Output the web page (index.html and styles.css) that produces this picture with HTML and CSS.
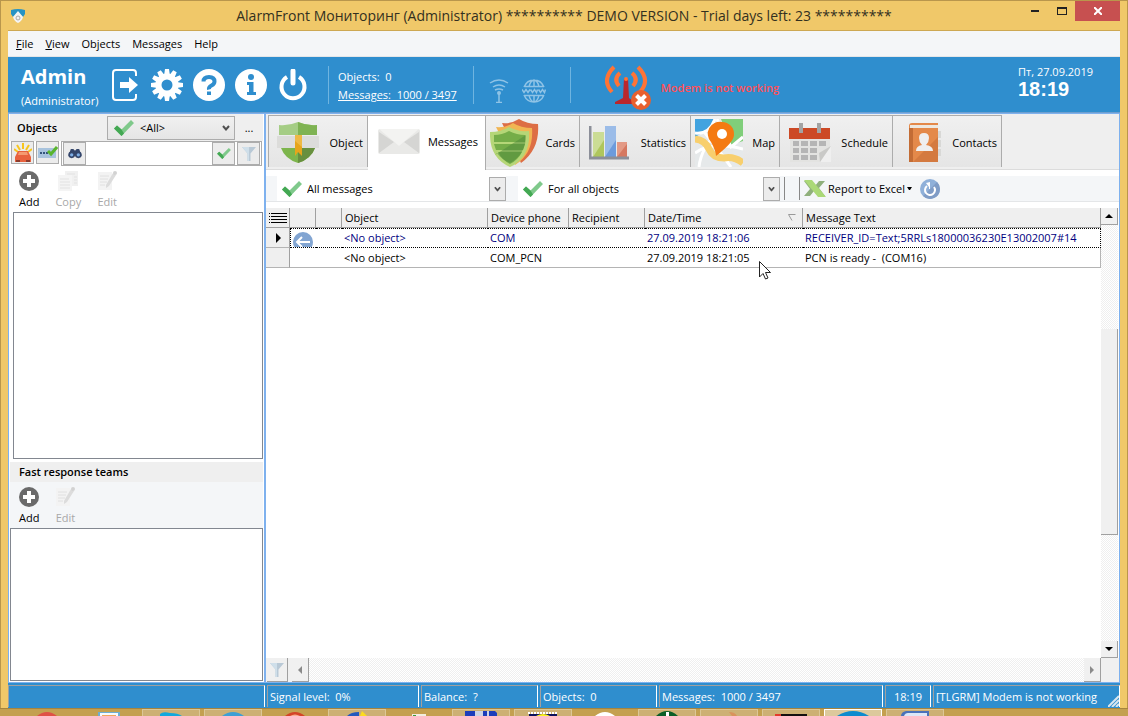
FILE: index.html
```html
<!DOCTYPE html>
<html lang="en">
<head>
    <meta charset="utf-8">
    <title>AlarmFront Мониторинг</title>
    <meta name="viewport" content="width=device-width, initial-scale=1">
    <link rel="stylesheet" href="styles.css">
</head>
<body>

<!-- shared icons -->
<svg class="sprite" aria-hidden="true">
    <symbol id="check" viewBox="0 0 20 16">
        <path d="M0 8.500 3 5.500 7.500 9.500 17 0 20 3 7.500 16z" fill="#7fc98b"/>
        <path d="M0 8.500 3 5.500 7.500 9.500 10 13.500 7.500 16z" fill="#43a853"/>
    </symbol>
    <symbol id="chevron" viewBox="0 0 8 6">
        <path d="M1 1l3 3.500L7 1" fill="none" stroke="#505050" stroke-width="2"/>
    </symbol>
    <symbol id="funnel" viewBox="0 0 14 14">
        <path d="M0 0h14L8.500 6.500V14h-3V6.500z" fill="#b9c9d6"/>
        <path d="M0 0h7v14H5.500V6.500z" fill="#cfdfea"/>
    </symbol>
    <symbol id="add" viewBox="0 0 20 20">
        <circle cx="10" cy="10" r="10" fill="#6a6a6a"/>
        <path d="M8 4h4v4h4v4h-4v4H8v-4H4V8h4z" fill="#fff"/>
    </symbol>
    <symbol id="copy" viewBox="0 0 20 20">
        <path d="M7 0h13v15H7z" fill="#f0f0f0"/>
        <path d="M0 4h14v16H0z" fill="#f4f4f4"/>
        <path d="M2 8h9M2 11h10M2 14h10M2 17h10M9 3h8M16 6h3M16 9h3M16 12h3" stroke="#e2e2e2" fill="none"/>
    </symbol>
    <symbol id="edit" viewBox="0 0 20 20">
        <path d="M1 1h14v18H1z" fill="#f3f3f3"/>
        <path d="M3 5h9M3 8h8M3 11h7M3 14h5" stroke="#e0e0e0" fill="none"/>
        <path d="M9 14 16 2l3 2-7 11-3 2z" fill="#dcdcdc"/>
        <circle cx="18" cy="2" r="2" fill="#d2d2d2"/>
    </symbol>
</svg>

<div class="window">
    <header class="titlebar">
        <svg class="app-icon" width="14" height="14" viewBox="0 0 14 14">
            <path d="M0 1Q7-1 14 1V5L12 8 7 3 2 8 0 5z" fill="#2793c4"/>
            <path d="M7 2 2 8q1 4 5 6 4-2 5-6z" fill="#f4f4f4"/>
            <circle cx="7" cy="9" r="2" fill="none" stroke="#aaa"/>
        </svg>
        <h1>AlarmFront Мониторинг (Administrator) ********** DEMO VERSION - Trial days left: 23 **********</h1>
        <div class="window-buttons">
            <button aria-label="Minimize"><svg width="8" height="2"><path d="M0 0h8v2H0z" fill="#222"/></svg></button>
            <button aria-label="Maximize"><svg width="10" height="8"><path d="M0 0h10v8H0zM1 2v5h8V2z" fill="#222" fill-rule="evenodd"/></svg></button>
            <button class="close" aria-label="Close"><svg width="8" height="8" viewBox="0 0 8 8"><path d="M0 0l8 8M8 0L0 8" stroke="#fff" stroke-width="2"/></svg></button>
        </div>
    </header>

    <div class="client">
        <nav class="menu">
            <a href="#"><u>F</u>ile</a>
            <a href="#"><u>V</u>iew</a>
            <a href="#">Objects</a>
            <a href="#">Messages</a>
            <a href="#">Help</a>
        </nav>

        <div class="banner">
            <div class="user">
                <strong>Admin</strong>
                <span>(Administrator)</span>
            </div>
            <div class="actions">
                <button aria-label="Log out">
                    <svg width="32" height="32" viewBox="0 0 32 32">
                        <path d="M27 7V4q0-3-3-3H7Q4 1 4 4v24q0 3 3 3h17q3 0 3-3v-3" fill="none" stroke="#fff" stroke-width="2"/>
                        <path d="M11 13h9V8l9 8-9 8v-5h-9z" fill="#fff"/>
                    </svg>
                </button>
                <button aria-label="Settings">
                    <svg width="32" height="32" viewBox="-16 -16 32 32">
                        <g fill="#fff">
                            <g id="teeth"><path id="tooth" d="M-3-9-2-16h4l1 7zM-3 9-2 16h4l1-7z"/><use href="#tooth" transform="rotate(90)"/></g>
                            <use href="#teeth" transform="rotate(30)"/>
                            <use href="#teeth" transform="rotate(60)"/>
                        </g>
                        <circle r="8.500" fill="none" stroke="#fff" stroke-width="6"/>
                    </svg>
                </button>
                <button aria-label="Help">
                    <svg width="32" height="32" viewBox="0 0 32 32">
                        <circle cx="16" cy="16" r="16" fill="#fff"/>
                        <path d="M10.500 12.500Q10.500 8 16 8t5.500 4.500Q21.500 15 18.500 16.500T16 20.500" fill="none" stroke="#2f8ece" stroke-width="4"/>
                        <path d="M14 22.500h4V26h-4z" fill="#2f8ece"/>
                    </svg>
                </button>
                <button aria-label="Information">
                    <svg width="32" height="32" viewBox="0 0 32 32">
                        <circle cx="16" cy="16" r="16" fill="#fff"/>
                        <circle cx="16" cy="8" r="3" fill="#2f8ece"/>
                        <path d="M12 13h6.500v10H21v3h-9v-3h2v-7h-2z" fill="#2f8ece"/>
                    </svg>
                </button>
                <button aria-label="Exit">
                    <svg width="32" height="32" viewBox="0 0 32 32">
                        <path d="M10 8a11.500 11.500 0 1 0 12 0" fill="none" stroke="#fff" stroke-width="4"/>
                        <path d="M16 2v12" stroke="#fff" stroke-width="5" stroke-linecap="round"/>
                    </svg>
                </button>
            </div>
            <div class="counters">
                <span>Objects:&nbsp; 0</span>
                <a href="#">Messages:&nbsp; 1000 / 3497</a>
            </div>
            <div class="links">
                <svg width="20" height="24" viewBox="0 0 20 24" fill="none" stroke="#8fc3e6" stroke-width="2">
                    <path d="M1 4Q10-2 19 4M4 8q6-4 12 0M6 11q4-2 8 0M10 14v9M7 23.500h6" stroke-width="1.500"/>
                    <circle cx="10" cy="14" r="1"/>
                </svg>
                <svg width="24" height="24" viewBox="0 0 24 24" fill="none" stroke="#8fc3e6" stroke-width="2">
                    <path d="M2 8Q5 1 12 1t10 7M2 16q3 7 10 7t10-7M7 8q1-6 5-7 4 1 5 7M7 16q1 6 5 7 4-1 5-7M2 7.500h20M2 16.500h20M12 1v7M12 16v7" stroke-width="1.500"/>
                    <path d="M0 10.500l2 3 2-3 2 3 2-3M8.500 10.500l2 3 2-3 2 3 1-3M16.500 10.500l2 3 2-3 2 3 1-3" stroke-width="1.500"/>
                </svg>
            </div>
            <div class="modem">
                <svg width="46" height="46" viewBox="0 0 46 46">
                    <path d="M9 2Q-4 15 7 27M33 2q13 13 2 25" fill="none" stroke="#ff7436" stroke-width="4"/>
                    <path d="M15 8q-7 6-1 13M27 8q7 6 1 13" fill="none" stroke="#ff7436" stroke-width="4"/>
                    <path d="M19 13h4l1 20 8 6H10v-2l8-4z" fill="#b9272d"/>
                    <circle cx="21" cy="14" r="2" fill="#ff7436"/>
                    <circle cx="36" cy="35" r="10" fill="#e8602f"/>
                    <path d="M31.500 30.500l9 9M40.500 30.500l-9 9" stroke="#fff" stroke-width="4"/>
                </svg>
                <strong>Modem is not working</strong>
            </div>
            <div class="clock">
                <span>Пт, 27.09.2019</span>
                <strong>18:19</strong>
            </div>
        </div>

        <main>
            <aside>
                <div class="panel-title">
                    <h2>Objects</h2>
                    <div class="combo group-combo">
                        <svg width="20" height="16"><use href="#check"/></svg>
                        <select aria-label="Object group"><option>&lt;All&gt;</option></select>
                        <svg class="caret" width="8" height="6"><use href="#chevron"/></svg>
                    </div>
                    <button class="more" aria-label="More groups">...</button>
                </div>
                <div class="search-row">
                    <button class="tool" aria-label="Alarms">
                        <svg width="18" height="20" viewBox="0 0 18 20">
                            <path d="M9 0v6M3 2l3 5M15 2l-3 5M0 6l4 3M18 6l-4 3" stroke="#f7c51e" stroke-width="2"/>
                            <path d="M4 8h10l2 4 1 2v5H1v-5l1-2z" fill="#e8623e"/>
                            <path d="M5 9h8l1 3H4z" fill="#f59a70"/>
                            <path d="M2 17h4v2H2zM12 17h4v2h-4z" fill="#8d3b2c"/>
                        </svg>
                    </button>
                    <button class="tool" aria-label="Lines">
                        <svg width="20" height="14" viewBox="0 0 20 14">
                            <path d="M0 2h18v10H0z" fill="#a8c3dd"/>
                            <path d="M2 7h11" stroke="#34557c" stroke-width="2" stroke-dasharray="2 1"/>
                            <path d="M10 5l3 3 6-7" fill="none" stroke="#59b52d" stroke-width="3"/>
                        </svg>
                    </button>
                    <div class="search">
                        <button class="tool" aria-label="Find">
                            <svg width="16" height="10" viewBox="0 0 16 12">
                                <path d="M3 0h3l2 2 2-2h3l3 8H0z" fill="#34466b"/>
                                <circle cx="4" cy="7" r="4" fill="#34466b"/><circle cx="12" cy="7" r="4" fill="#34466b"/>
                                <circle cx="4" cy="7" r="2" fill="#7eaee6"/><circle cx="12" cy="7" r="2" fill="#7eaee6"/>
                            </svg>
                        </button>
                        <input type="text" aria-label="Search objects">
                        <button class="tool" aria-label="Apply"><svg width="14" height="11"><use href="#check"/></svg></button>
                        <button class="tool" aria-label="Filter"><svg width="14" height="14"><use href="#funnel"/></svg></button>
                    </div>
                </div>
                <div class="toolbar">
                    <button><svg width="20" height="20"><use href="#add"/></svg>Add</button>
                    <button disabled><svg width="20" height="20"><use href="#copy"/></svg>Copy</button>
                    <button disabled><svg width="20" height="20"><use href="#edit"/></svg>Edit</button>
                </div>
                <div class="list objects-list"></div>

                <h2 class="teams-title">Fast response teams</h2>
                <div class="toolbar teams-toolbar">
                    <button><svg width="20" height="20"><use href="#add"/></svg>Add</button>
                    <button disabled><svg width="20" height="20"><use href="#edit"/></svg>Edit</button>
                </div>
                <div class="list teams-list"></div>
            </aside>

            <section class="content">
                <div class="tabs">
                    <button class="tab tab-object">
                        <svg width="42" height="42" viewBox="0 0 42 42">
                            <path d="M2 3q10 1 19-3 9 4 19 3v10H2z" fill="#a5cd85"/>
                            <path d="M21 0q9 4 19 3v10H21z" fill="#7fb353"/>
                            <path d="M4 26h34q-4 11-17 15Q8 37 4 26z" fill="#7db54c"/>
                            <path d="M21 26h17q-4 11-17 15z" fill="#68903f"/>
                            <path d="M0 14h42v12H0z" fill="#dcdcda"/>
                            <path d="M18 13h7v21l-4-4-3 4z" fill="#e6a51b"/>
                            <path d="M25 13v12l-7-6v-6z" fill="#eeb944"/>
                        </svg>
                        Object
                    </button>
                    <button class="tab tab-messages active">
                        <svg width="42" height="26" viewBox="0 0 42 26">
                            <rect width="42" height="25" rx="2" fill="#e9e9e7"/>
                            <path d="M1 3l15 10L1 24zM41 3L26 13l15 11z" fill="#d5d5d3"/>
                            <path d="M1 0h40L21 17z" fill="#f3f3f1"/>
                        </svg>
                        Messages
                    </button>
                    <button class="tab tab-cards">
                        <svg width="50" height="48" viewBox="0 0 50 48">
                            <path d="M12 4q9 1 17-4 8 5 19 5 2 25-17 39z" fill="#dd6e45"/>
                            <path d="M6 8q9 1 17-4 8 5 19 5 2 25-17 37z" fill="#f1b553"/>
                            <path d="M0 13q11 0 19-5 9 5 20 4 2 26-19 36Q-1 39 0 13z" fill="#b5d677"/>
                            <path d="M4 16q8 0 15-4 8 4 16 4v7H4zM4 25h31l-2 6H6zM8 33h24q-4 8-12 12-8-4-12-12z" fill="#75ad48"/>
                            <path d="M5 36 36 16q0 19-16 28-9-4-13-10z" fill="#4d873a" opacity=".5"/>
                        </svg>
                        Cards
                    </button>
                    <button class="tab tab-statistics">
                        <svg width="41" height="36" viewBox="0 0 41 36">
                            <path d="M4 7h11v25H4z" fill="#cbdc95"/><path d="M4 32 15 15v17z" fill="#afc65d"/>
                            <path d="M16 1h11v31H16z" fill="#9bbce8"/><path d="M16 32 27 15v17z" fill="#6d9bdc"/>
                            <path d="M28 17h10v15H28z" fill="#e39a86"/><path d="M28 32 38 19v13z" fill="#d57861"/>
                            <path d="M1 1v32h39" fill="none" stroke="#8c8f99" stroke-width="3"/>
                        </svg>
                        Statistics
                    </button>
                    <button class="tab tab-map">
                        <svg width="48" height="48" viewBox="0 0 48 48">
                            <path d="M0 0h48v48H0z" fill="#e6e9ea"/>
                            <path d="M0 0h20Q16 10 0 18z" fill="#42a3df"/>
                            <path d="M26 0h22v22l-12 4z" fill="#80ce7a"/>
                            <path d="M0 14Q14 16 20 0M22 0l14 28 12-10M4 48q2-20 22-38M0 34q16-12 48-4M36 48Q26 34 10 14" fill="none" stroke="#fff" stroke-width="3"/>
                            <path d="M0 20q10 1 14 10t15 9q10-2 19 5" fill="none" stroke="#f8cf6d" stroke-width="7"/>
                            <path d="M27 3a12 12 0 0 1 12 13q0 7-18 21 0-5-5-14A12 12 0 0 1 27 3z" fill="#f47a12"/>
                            <circle cx="27" cy="15" r="5" fill="#fff"/>
                        </svg>
                        Map
                    </button>
                    <button class="tab tab-schedule">
                        <svg width="42" height="40" viewBox="0 0 42 40">
                            <path d="M1 5h40v34H1z" fill="#e3e3e1"/>
                            <path d="M0 5h41v11H0z" fill="#cc4925"/>
                            <path d="M10 0h4v10h-4zM28 0h4v10h-4z" fill="#a3a3a3"/>
                            <path d="M4 18h6v5H4zM12 18h7v5h-7zM21 18h7v5h-7zM30 18h7v5h-7zM4 25h6v5H4zM12 25h7v5h-7zM21 25h7v5h-7zM4 32h6v5H4zM12 32h7v5h-7zM21 32h7v5h-7z" fill="#b5b5b5"/>
                            <path d="M42 23 31 39h11z" fill="#efefef"/><path d="M42 23 30 30l1 9z" fill="#c9c9c7"/>
                        </svg>
                        Schedule
                    </button>
                    <button class="tab tab-contacts">
                        <svg width="34" height="40" viewBox="0 0 34 40">
                            <path d="M29 8h4v7h-4zM29 17h4v7h-4zM29 26h4v7h-4z" fill="#d8d8d6"/>
                            <path d="M1 3q0-3 3-3h26v39H1z" fill="#e4894a"/>
                            <path d="M2 2h28v3H2z" fill="#eee8e0"/>
                            <path d="M1 5h4v34H1z" fill="#c36c35"/>
                            <path d="M30 14v25H5z" fill="#c36c35" opacity=".5"/>
                            <path d="M8 28q0-5 6-6-3-3-3-7 0-5 5-5t5 5q0 4-3 7 7 1 7 6z" fill="#efefef"/>
                        </svg>
                        Contacts
                    </button>
                </div>

                <div class="filters">
                    <div class="combo message-combo">
                        <svg width="20" height="16"><use href="#check"/></svg>
                        <select aria-label="Message type"><option>All messages</option></select>
                        <svg class="caret boxed" width="8" height="6" viewBox="0 0 8 6"><use href="#chevron"/></svg>
                    </div>
                    <div class="combo object-combo">
                        <svg width="20" height="16"><use href="#check"/></svg>
                        <select aria-label="Object"><option>For all objects</option></select>
                        <svg class="caret boxed" width="8" height="6" viewBox="0 0 8 6"><use href="#chevron"/></svg>
                    </div>
                    <span class="divider"></span>
                    <div class="report">
                        <button>
                            <svg width="22" height="17" viewBox="0 0 22 17">
                                <path d="M0 1h7l4 5 4-5h6l-6 7 6 8h-7l-4-5-4 5H0l6-7z" fill="#90b07c"/>
                                <path d="M0 0h8l14 17h-8z" fill="#abd977"/>
                            </svg>
                            Report to Excel
                            <svg width="5" height="3"><path d="M0 0h5L3 3H2z"/></svg>
                        </button>
                        <button aria-label="Refresh">
                            <svg width="20" height="20" viewBox="0 0 20 20">
                                <circle cx="10" cy="10" r="10" fill="#8fb0d9"/>
                                <path d="M20 10a10 10 0 0 1-17 7L17 3a10 10 0 0 1 3 7z" fill="#7f9cc6"/>
                                <path d="M7 7a5 5 0 1 0 7 1" fill="none" stroke="#fff" stroke-width="2"/>
                                <path d="M10 3v7H9V8L6 4z" fill="#fff"/>
                            </svg>
                        </button>
                    </div>
                </div>

                <div class="grid">
                    <div class="grid-body">
                        <table>
                            <colgroup>
                                <col class="col-mark"><col class="col-icon"><col class="col-icon"><col class="col-object">
                                <col class="col-phone"><col class="col-recipient"><col class="col-date"><col>
                            </colgroup>
                            <thead>
                                <tr>
                                    <th><svg width="18" height="10"><path d="M0 .5h1M0 3.500h1M0 6.500h1M0 9.500h1M2 .5h16M2 3.500h16M2 6.500h16M2 9.500h16" stroke="#000"/></svg></th>
                                    <th></th>
                                    <th></th>
                                    <th>Object</th>
                                    <th>Device phone</th>
                                    <th>Recipient</th>
                                    <th><div class="sorted">Date/Time <svg width="8" height="7"><path d="M7.500.5h-7L4 6.500" fill="none" stroke="#999"/></svg></div></th>
                                    <th>Message Text</th>
                                </tr>
                            </thead>
                            <tbody>
                                <tr class="selected">
                                    <td><svg width="5" height="10"><path d="M0 0l5 5-5 5z"/></svg></td>
                                    <td>
                                        <svg class="incoming" width="20" height="15" viewBox="0 0 20 15">
                                            <circle cx="10" cy="10" r="10" fill="#82a5d2"/>
                                            <path d="M17 10H5M9 5l-5 5 5 5" fill="none" stroke="#fff" stroke-width="2"/>
                                        </svg>
                                    </td>
                                    <td></td>
                                    <td>&lt;No object&gt;</td>
                                    <td>COM</td>
                                    <td></td>
                                    <td>27.09.2019 18:21:06</td>
                                    <td>RECEIVER_ID=Text;5RRLs18000036230E13002007#14</td>
                                </tr>
                                <tr>
                                    <td></td>
                                    <td></td>
                                    <td></td>
                                    <td>&lt;No object&gt;</td>
                                    <td>COM_PCN</td>
                                    <td></td>
                                    <td>27.09.2019 18:21:05</td>
                                    <td>PCN is ready -&nbsp; (COM16)</td>
                                </tr>
                            </tbody>
                        </table>
                    </div>
                    <div class="vscroll">
                        <button aria-label="Scroll up"><svg width="8" height="4"><path d="M0 4l4-4 4 4z"/></svg></button>
                        <div class="track"><div class="thumb"></div></div>
                        <button aria-label="Scroll down"><svg width="8" height="4"><path d="M0 0h8L4 4z"/></svg></button>
                    </div>
                </div>
                <div class="hscroll">
                    <button aria-label="Filter"><svg width="14" height="14"><use href="#funnel"/></svg></button>
                    <button class="arrow" aria-label="Scroll left"><svg width="4" height="8"><path d="M4 0v8L0 4z" fill="#8a8a8a"/></svg></button>
                    <div class="track"></div>
                    <button class="arrow" aria-label="Scroll right"><svg width="4" height="8"><path d="M0 0v8l4-4z" fill="#8a8a8a"/></svg></button>
                </div>
            </section>
        </main>

        <footer class="status">
            <span class="cell-blank"></span>
            <span class="cell-signal">Signal level:&nbsp; 0%</span>
            <span class="cell-count">Balance:&nbsp; ?</span>
            <span class="cell-count">Objects:&nbsp; 0</span>
            <span class="cell-messages">Messages:&nbsp; 1000 / 3497</span>
            <span class="cell-time">18:19</span>
            <span class="cell-telegram"><b>[TLGRM] Modem is not working</b><svg width="11" height="12" viewBox="0 0 11 12"><path d="M0 12 11 1M4 12l7-7M8 12l3-3" stroke="#d9e6ee" stroke-width="2"/></svg></span>
        </footer>
    </div>
</div>

<div class="taskbar">
    <span><svg width="24" height="4" viewBox="0 0 24 4"><path d="M2 4Q12-4 22 4z" fill="#df5146"/></svg></span>
    <span><svg width="22" height="4"><path d="M0 0h22v4H0z" fill="#6eaed2"/><path d="M2 1h18v3H2z" fill="#f7fbfd"/><path d="M4 3h14v1H4z" fill="#f3a65c"/></svg></span>
    <span class="open"><svg width="22" height="4"><path d="M0 4V2q3-3 10-1 8 0 12 3z" fill="#12a8dc"/></svg></span>
    <span class="open"><svg width="22" height="4"><path d="M0 4Q11-4 22 4z" fill="#3d9fd5"/></svg></span>
    <span><svg width="20" height="4"><path d="M0 4Q10-4 20 4z" fill="#d54427"/><path d="M5 4q5-3 10 0z" fill="#f8ae92"/></svg></span>
    <span class="open"><svg width="24" height="5"><path d="M2 5q4-4 12-4v4z" fill="#2458bd"/><path d="M15 5l2-5 5 5z" fill="#fddc1e"/></svg></span>
    <span><svg width="14" height="3"><path d="M0 1h14v2H0z" fill="#f2efe0"/><path d="M1 2h3v1H1z" fill="#399a3d"/></svg></span>
    <span class="open"><svg width="32" height="5"><path d="M0 0h30l2 2v3H0z" fill="#1d3dba"/><path d="M10 0h14v5H10z" fill="#cdd3e4"/><path d="M18 0h4v5h-4z" fill="#1d3dba"/></svg></span>
    <span class="open"><svg width="30" height="4"><path d="M0 1h30" stroke="#fff" stroke-width="2" stroke-dasharray="2 1"/><path d="M1 2h28v2H1z" fill="#0c125d"/><path d="M8 4q7-4 14 0z" fill="#fdf51d"/></svg></span>
    <span><svg width="20" height="4"><path d="M0 4Q10-4 20 4z" fill="#fff"/></svg></span>
    <span class="open"><svg width="22" height="5"><path d="M0 5Q11-5 22 5z" fill="#0b5e27"/><path d="M10 1h3v4h-3z" fill="#fff"/></svg></span>
    <span class="open"><svg width="20" height="4"><path d="M10 0q6 0 8 4h-5z" fill="#d9935c"/></svg></span>
    <span class="open"><svg width="32" height="3"><path d="M0 1h32v2H0z" fill="#141010"/><path d="M0 1h6v2H0z" fill="#e23b2c"/></svg></span>
    <span class="open front"><svg width="32" height="5"><path d="M0 5Q16-5 32 5z" fill="#0d8bce"/></svg></span>
    <span class="open"><svg width="28" height="5"><path d="M0 5q0-4 5-5h23v5z" fill="#4a72ba"/><path d="M3 5q1-3 4-3h19v3z" fill="#dce7f8"/></svg></span>
</div>

<svg class="cursor" width="12" height="19" viewBox="0 0 12 19"><path d="M.5.500v15.500l3.500-3.500 2.500 5.500 2.500-1-2.500-5.500h5z" fill="#fff" stroke="#222"/></svg>

</body>
</html>
```

FILE: styles.css
```css
* {
    box-sizing: border-box;
}

body {
    margin: 0;
    height: 100vh;
    display: flex;
    flex-direction: column;
    overflow: hidden;
    background: #f0c869;
    font-family: "Open Sans", "Noto Sans", sans-serif;
    font-size: 11px;
    line-height: 16px;
    color: #000;
}

h1, h2 {
    margin: 0;
    font-size: inherit;
}

svg {
    display: block;
    flex: none;
}

a {
    color: inherit;
    text-decoration: none;
}

button, select, input {
    font: inherit;
    color: inherit;
    background: none;
    border: 0;
    border-radius: 0;
    padding: 0;
    margin: 0;
}

.sprite {
    position: absolute;
    width: 0;
    height: 0;
}

/* window frame */
.window {
    flex: 1;
    min-height: 0;
    display: flex;
    flex-direction: column;
    border: 1px solid #b9964c;
    border-bottom: 0;
    padding: 0 7px;
}

.titlebar {
    height: 29px;
    display: grid;
    grid-template-columns: 1fr auto 1fr;
    align-items: center;
}

.app-icon {
    margin-left: 3px;
}

.titlebar h1 {
    font-size: 14px;
    font-weight: normal;
    color: #33301f;
    white-space: nowrap;
}

.window-buttons {
    justify-self: end;
    align-self: start;
    display: flex;
}

.window-buttons button {
    width: 27px;
    height: 20px;
    display: flex;
    align-items: center;
    justify-content: center;
}

.window-buttons .close {
    width: 45px;
    background: #c75050;
}

.client {
    flex: 1;
    min-height: 0;
    display: flex;
    flex-direction: column;
    border-top: 1px solid #cda853;
    background: #fff;
}

.menu {
    height: 26px;
    display: flex;
    gap: 12px;
    align-items: center;
    padding-left: 8px;
    background: #f4f6f8;
    border-bottom: 1px solid #e4e6e8;
}

/* blue banner */
.banner {
    height: 56px;
    display: flex;
    align-items: center;
    background: #2f8ece;
    color: #fff;
    border-bottom: 1px solid #6e9fd0;
}

.user {
    width: 101px;
    padding: 4px 0 0 13px;
}

.user strong {
    display: block;
    font-size: 20px;
    line-height: 28px;
}

.user span, .counters span, .counters a, .clock span, .clock strong {
    display: block;
}

.user span {
    line-height: 20px;
}

.actions {
    display: flex;
    gap: 10px;
}

.counters {
    margin-left: 19px;
    padding: 0 16px 0 9px;
    border-left: 1px solid #6fb4e0;
    border-right: 1px solid #6fb4e0;
    line-height: 18px;
}

.counters span {
    padding-top: 2px;
}

.counters a {
    text-decoration: underline;
}

.links {
    height: 36px;
    display: flex;
    align-items: flex-end;
    gap: 13px;
    padding: 0 24px 0 15px;
    border-right: 1px solid #6fb4e0;
}

.modem {
    display: flex;
    align-items: center;
    gap: 10px;
    margin-left: 34px;
    padding-top: 6px;
    color: #ff5058;
}

.modem strong {
    font-weight: 600;
    white-space: nowrap;
}

.clock {
    margin: 0 27px 0 auto;
    padding-bottom: 6px;
    line-height: 14px;
}

.clock strong {
    font: bold 20px/20px "Liberation Sans", Arial, sans-serif;
}

main {
    flex: 1;
    min-height: 0;
    display: flex;
    border: 1px solid #7eb1ee;
}

/* left side */
aside {
    width: 257px;
    display: flex;
    flex-direction: column;
    border-right: 2px solid #7eb1ee;
    padding: 0 1px 1px;
}

.panel-title {
    height: 27px;
    display: flex;
    align-items: center;
    background: #efefef;
    padding-left: 7px;
}

.panel-title h2, .teams-title {
    font-weight: 600;
}

.panel-title h2 {
    flex: 1;
}

.combo {
    display: flex;
    align-items: center;
    position: relative;
}

.combo select {
    flex: 1;
    min-width: 0;
    height: 100%;
    appearance: none;
    outline: 0;
}

.caret {
    position: absolute;
    right: 4px;
    pointer-events: none;
}

.group-combo {
    width: 128px;
    height: 24px;
    gap: 6px;
    padding-left: 6px;
    border: 1px solid #acacac;
    background: linear-gradient(#f0f0f0, #e5e5e5);
}

.more {
    width: 28px;
}

.search-row {
    display: flex;
    gap: 2px;
    padding: 0 1px;
}

.tool {
    width: 23px;
    height: 23px;
    display: flex;
    align-items: center;
    justify-content: center;
    border: 1px solid #acacac;
    background: #ececec;
    flex: none;
}

.search {
    flex: 1;
    min-width: 0;
    display: flex;
    gap: 2px;
    border: 1px solid #acacac;
    padding: 0 1px;
}

.search input {
    flex: 1;
    min-width: 0;
}

.toolbar {
    height: 46px;
    display: flex;
    gap: 16px;
    padding: 5px 0 0 9px;
}

.toolbar button {
    display: flex;
    flex-direction: column;
    align-items: center;
    gap: 3px;
}

.toolbar button:disabled {
    color: #a8a8a8;
}

.teams-title {
    margin-top: 3px;
    padding: 2px 9px;
    background: #efefef;
}

.teams-toolbar {
    background: #f4f6f8;
}

.list {
    border: 1px solid #828790;
}

.objects-list {
    flex: 249;
    margin-left: 3px;
}

.teams-list {
    flex: 153;
}

/* right side */
.content {
    flex: 1;
    min-width: 0;
    display: flex;
    flex-direction: column;
}

.tabs {
    display: flex;
    align-items: flex-end;
    height: 56px;
    padding: 1px 2px 0;
    background: #efefef;
    border-bottom: 1px solid #dcdcdc;
}

.tab {
    height: 52px;
    margin-bottom: 2px;
    display: flex;
    align-items: center;
    justify-content: space-between;
    padding: 2px 4px 0;
    border: 1px solid #acacac;
    border-width: 1px 1px 0;
    background: linear-gradient(#f0f0f0, #e5e5e5);
}

.tab + .tab {
    border-left: 0;
}

.tab.active {
    height: 55px;
    margin-bottom: -1px;
    padding-bottom: 4px;
    background: #fff;
}

.tab-object {
    width: 100px;
    padding-left: 8px;
}

.tab-messages {
    width: 118px;
    padding-left: 10px;
    padding-right: 7px;
}

.tab-cards {
    width: 94px;
}

.tab-statistics {
    width: 111px;
    padding-left: 9px;
}

.tab-map {
    width: 89px;
}

.tab-schedule {
    width: 113px;
    padding-left: 9px;
}

.tab-contacts {
    width: 109px;
    padding-left: 15px;
}

.filters {
    height: 26px;
    margin: 6px 0;
    display: flex;
    padding-left: 11px;
    background: #f4f6f8;
    border-bottom: 1px solid #e4e6e8;
    flex: none;
}

.filters .combo {
    gap: 5px;
    padding-left: 5px;
    background: #fff;
}

.message-combo {
    width: 229px;
}

.object-combo {
    width: 262px;
    margin-left: 12px;
}

.caret.boxed {
    right: 0;
    width: 17px;
    height: 24px;
    padding: 8px 4px;
    border: 1px solid #acacac;
    background: #ececec;
}

.divider {
    width: 16px;
    margin: 1px 0 1px 4px;
    border: 1px solid #888;
    border-width: 0 1px;
}

.report {
    display: flex;
    align-items: center;
    gap: 8px;
    padding-left: 4px;
}

.report button {
    display: flex;
    align-items: center;
    white-space: nowrap;
    gap: 2px;
}

/* messages grid */
.grid {
    flex: 1;
    min-height: 0;
    display: flex;
}

.grid-body {
    flex: 1;
    min-width: 0;
}

table {
    width: 100%;
    table-layout: fixed;
    border-spacing: 0;
}

.col-mark {
    width: 24px;
}

.col-icon {
    width: 26px;
}

.col-object {
    width: 146px;
}

.col-phone {
    width: 81px;
}

.col-recipient {
    width: 76px;
}

.col-date {
    width: 158px;
}

th, td {
    height: 20px;
    padding: 0 0 0 3px;
    text-align: left;
    font-weight: normal;
    white-space: nowrap;
    overflow: hidden;
}

th {
    background: #efefef;
    border-right: 1px solid #a0a0a0;
    border-bottom: 1px solid #a0a0a0;
}

td {
    padding-left: 2px;
    border-bottom: 1px solid #b4b4b4;
}

td:first-child {
    background: #efefef;
    border-right: 1px solid #a0a0a0;
    padding-left: 10px;
}

td:last-child {
    border-right: 1px solid #b4b4b4;
}

.selected {
    color: #000080;
}

.selected td:not(:first-child) {
    border-top: 1px dotted #000;
    border-bottom: 1px dotted #000;
}

.selected td:nth-child(2) {
    border-left: 1px dotted #000;
}

.selected td:last-child {
    border-right: 1px dotted #000;
}

.incoming {
    margin-top: 3px;
}

.sorted {
    display: flex;
    align-items: center;
    justify-content: space-between;
    padding-right: 6px;
}

.vscroll {
    width: 18px;
    display: flex;
    flex-direction: column;
    padding-right: 1px;
}

.vscroll button, .hscroll button {
    display: flex;
    align-items: center;
    justify-content: center;
    background: #f0f0f0;
    border-right: 1px solid #a0a0a0;
    border-bottom: 1px solid #a0a0a0;
    flex: none;
}

.vscroll button {
    height: 17px;
}

.track {
    flex: 1;
    background: repeating-conic-gradient(#fff 0 25%, #efefef 0 50%) 0 0 / 2px 2px;
}

.vscroll .track {
    padding-top: 104px;
}

.thumb {
    height: 66%;
    background: #f0f0f0;
    border: 1px solid #a0a0a0;
    border-width: 0 1px 1px 0;
}

.hscroll {
    height: 24px;
    display: flex;
    padding: 0 18px 0 1px;
    background: #f0f0f0;
}

.hscroll button {
    width: 21px;
}

.hscroll .arrow {
    width: 17px;
}

.hscroll button + .arrow {
    margin-left: 4px;
}

/* status bar */
.status {
    height: 25px;
    display: flex;
    gap: 2px;
    padding: 2px 0 1px;
    background: #2f8ece;
    color: #fff;
}

.status span {
    flex: none;
    padding: 3px 2px 0;
    border: 1px solid #a0a0a0;
    border-right-color: #fff;
    border-bottom: 0;
    white-space: nowrap;
}

.cell-blank {
    width: 257px;
}

.cell-signal {
    width: 152px;
}

.cell-count {
    width: 117px;
}

.cell-messages {
    width: 224px;
}

.status .cell-time {
    width: 46px;
    text-align: center;
}

.status .cell-telegram {
    flex: 1;
    min-width: 0;
    display: flex;
    align-items: flex-end;
    gap: 6px;
    padding-right: 0;
}

.cell-telegram b {
    flex: 1;
    font-weight: normal;
    align-self: flex-start;
}

/* top edge of the desktop taskbar */
.taskbar {
    height: 8px;
    display: flex;
    gap: 4px;
    padding-left: 18px;
    background: #c4a050;
    border-top: 1px solid #a5843f;
    flex: none;
}

.taskbar span {
    width: 58px;
    display: flex;
    align-items: flex-end;
    justify-content: center;
}

.taskbar .open {
    background: #cdb074;
    border: 1px solid #dcc797;
    border-bottom: 0;
}

.taskbar .front {
    background: #dcc99c;
    border-color: #fff;
}

.cursor {
    position: absolute;
    left: 759px;
    top: 261px;
}
```
